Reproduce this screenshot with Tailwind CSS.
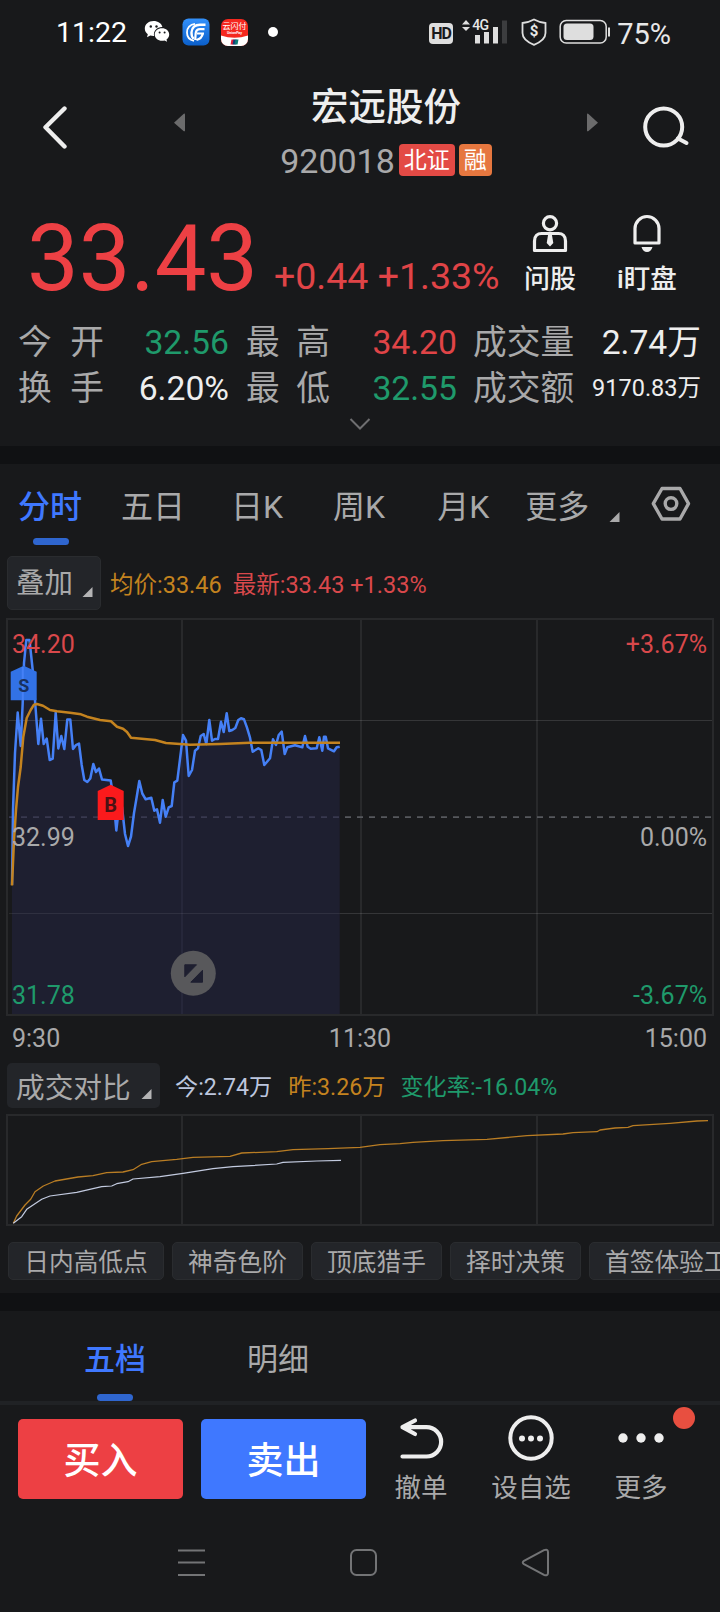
<!DOCTYPE html>
<html lang="zh-CN">
<head>
  <meta charset="UTF-8">
  <meta name="viewport" content="width=device-width, initial-scale=1.0">
  <title>宏远股份 920018</title>
  <script src="https://cdn.jsdelivr.net/npm/@tailwindcss/browser@4"></script>
</head>
<body class="w-[720px] h-[1612px] overflow-hidden bg-[#18191b] text-[#a9a9aa] font-['Roboto','Noto_Sans_CJK_SC',sans-serif] whitespace-nowrap">

  <!-- Status bar -->
  <div class="h-16 flex items-center pl-14 pr-[49px] text-[#e8e8e8]">
    <span class="w-[71px] text-[28.500px] leading-8 text-white mt-0.5">11:22</span>
    <svg class="ml-[17px]" width="26" height="24" viewBox="0 0 26 24">
      <path fill="#fff" d="M9.500 1C4.500 1 .8 4.300.8 8.500c0 2.300 1.100 4.300 3 5.700l-.8 3 3.300-1.700c1 .3 2 .5 3.200.5h.6C9 11 13 7 18 7h.4C17.600 3.500 14 1 9.500 1z"/>
      <path fill="#fff" d="M18 8.200c-4 0-7.300 2.700-7.300 6.300s3.300 6.300 7.300 6.300c.9 0 1.700-.1 2.500-.4l2.600 1.400-.6-2.300c1.700-1.200 2.700-3 2.700-5 0-3.600-3.200-6.300-7.200-6.300z"/>
      <g fill="#18191b"><circle cx="6.800" cy="6.500" r="1.200"/><circle cx="12.500" cy="6.500" r="1.200"/><circle cx="15.600" cy="12.600" r="1"/><circle cx="20.600" cy="12.600" r="1"/></g>
    </svg>
    <svg class="ml-3" width="28" height="28" viewBox="0 0 28 28">
      <defs><linearGradient id="app" x1="0" y1="0" x2="0" y2="1"><stop stop-color="#3391fb"/><stop offset="1" stop-color="#0b5fca"/></linearGradient></defs>
      <rect x=".5" y=".5" width="27" height="27" rx="6" fill="url(#app)"/>
      <g fill="none" stroke="#fff">
        <path stroke-width="1.800" d="M13 5.800C8 6.500 5 10 5 14.500c0 4.200 2.600 7.500 7 8.300"/>
        <path stroke-width="2.400" d="M23.500 6.800h-5.500c-5 0-8 3-8.500 7.500-.2 2.800.6 5 2.200 6.500"/>
        <path stroke-width="2.200" d="M22.500 11.200H18c-2.800 0-4 1.700-4.300 4l-.5 6.800M22 15.500h-7M20.800 15.500c-.6 3.200-3 5.700-6.300 6.500"/>
      </g>
    </svg>
    <div class="ml-[11px] relative w-[27px] h-[27px] rounded-[7px] overflow-hidden bg-[#f4281f]">
      <svg class="absolute inset-0" width="27" height="27" viewBox="0 0 27 27">
        <path fill="#fff" d="M0 16.500Q13.500 21 27 16.500V27H0z"/>
        <path fill="#e0203a" d="M10.500 20.500h3l-1 5h-3z"/><path fill="#143a78" d="M12.500 20.500h3l-1 5h-3z"/><path fill="#0d7d78" d="M14.500 20.500h3l-1 5h-3z"/>
      </svg>
      <span class="absolute left-[1.500px] top-[3px] text-[8px] leading-[10px] text-white">云闪付</span>
      <span class="absolute left-[6px] top-[12px] text-[3.500px] leading-[4px] font-bold text-white">UnionPay</span>
    </div>
    <div class="ml-5 w-2.5 h-2.5 rounded-full bg-white"></div>

    <div class="ml-auto flex items-center">
      <div class="w-6 h-[21px] rounded-[4px] bg-[#dedede] text-[#18191b] text-[16px] leading-[21px] font-bold text-center tracking-[-1px] mt-0.5">HD</div>
      <div class="relative ml-2 w-[46px] h-[27px]">
        <svg width="46" height="27" viewBox="0 0 46 27">
          <path fill="#dedede" d="M1 5.500L5 1l4 4.500zM1 8l4 4 4-4z"/>
          <path fill="#dedede" d="M14 16h5v8.500h-5zM23 13h5v11.500h-5zM32 8h5v16.500h-5z"/>
          <path fill="#3c3d3f" d="M41 1.500h5v23h-5z"/>
        </svg>
        <span class="absolute left-[11px] -top-[2px] text-[14px] leading-4 font-medium tracking-[-.5px]">4G</span>
      </div>
      <div class="relative ml-[13px] w-7 h-7">
        <svg width="28" height="28" viewBox="0 0 28 28" fill="none" stroke="#dedede" stroke-width="1.800"><path d="M14 1.500c3.500 2 7 3 11.500 3.500v10c0 5.500-4.500 9-11.500 11.800C7 24 2.500 20.500 2.500 15V5C7 4.500 10.500 3.500 14 1.500z"/></svg>
        <span class="absolute inset-0 text-center text-[15px] leading-[27px] font-bold">$</span>
      </div>
      <svg class="ml-[11px]" width="52" height="26" viewBox="0 0 52 26">
        <rect x="1.200" y="1.500" width="46" height="22.500" rx="6" fill="none" stroke="#dedede" stroke-width="1.500"/>
        <rect x="4.500" y="4.500" width="30" height="16.500" rx="3.500" fill="#dedede"/>
        <path stroke="#dedede" stroke-width="2" d="M50 8.500v9"/>
      </svg>
      <span class="ml-[6px] text-[29px] leading-8 mt-1">75%</span>
    </div>
  </div>

  <!-- Header -->
  <header class="h-[136px] flex items-start">
    <svg class="ml-[41px] mt-[41px]" width="28" height="44" viewBox="0 0 28 44" fill="none" stroke="#eee" stroke-width="4.400" stroke-linecap="round" stroke-linejoin="round"><path d="M23.500 3.500L4.500 22.300l19 19.200"/></svg>
    <svg class="ml-[105px] mt-[49px]" width="12" height="20" viewBox="0 0 12 20"><path fill="#6b6b6c" d="M0 9.700L9.500 1q1.500-1 1.500.6v15.800q0 1.500-1.500.6z"/></svg>
    <div class="w-[400px] flex flex-col items-center">
      <h1 class="mt-5 text-[37.500px] leading-[46px] font-medium text-[#eee]">宏远股份</h1>
      <div class="mt-3 flex items-center text-[34px] leading-[34px]">
        <span class="pt-0.5">920018</span>
        <span class="ml-[4px] w-14 h-8 rounded-[4px] bg-[#e34a45] text-white text-[23px] leading-[33px] text-center">北证</span>
        <span class="ml-1 w-[33px] h-8 rounded-[4px] bg-[#e6773f] text-white text-[23px] leading-[33px] text-center">融</span>
      </div>
    </div>
    <svg class="ml-[1px] mt-[49px]" width="12" height="20" viewBox="0 0 12 20"><path fill="#6b6b6c" d="M11 9.700L1.500 1Q0 0 0 1.600v15.800q0 1.500 1.500.6z"/></svg>
    <svg class="ml-[43px] mt-[40px]" width="48" height="48" viewBox="0 0 48 48" fill="none" stroke="#eee" stroke-width="4" stroke-linecap="round"><circle cx="21.700" cy="23" r="18.500"/><path d="M36 34.500l8.500 4.500"/></svg>
  </header>

  <!-- Quote -->
  <section class="h-[246px]">
    <div class="h-[120px] flex">
      <span class="ml-[27px] w-[247px] text-[92px] leading-[118px] text-[#ed4044]">33.43</span>
      <span class="w-[243px] mt-[55px] text-[37.500px] leading-[42px] text-[#e04447]">+0.44 +1.33%</span>
      <div class="w-[66px] flex flex-col items-center">
        <svg class="mt-[14px]" width="38" height="40" viewBox="0 0 38 40" fill="none" stroke="#eee" stroke-width="3.200">
          <circle cx="19" cy="9.300" r="6.600"/><path stroke-linejoin="round" d="M3.500 36.500V27c0-5 3-7.500 7-7.500h17c4 0 7 2.500 7 7.500v9.500z"/><path fill="#eee" stroke="none" d="M17.200 20h3.600l1.500 9L19 32.500 15.700 29z"/>
        </svg>
        <span class="mt-[12px] text-[26px] leading-[26px] font-medium text-[#eee]">问股</span>
      </div>
      <div class="ml-[31px] w-[66px] flex flex-col items-center">
        <svg class="mt-[14px]" width="30" height="40" viewBox="0 0 30 40" fill="none" stroke="#eee" stroke-width="3.200">
          <path stroke-linejoin="round" d="M3 29V14.500a12 12 0 0 1 24 0V29z"/><path fill="#eee" stroke="none" d="M9.500 33h11q-1.500 5-5.500 5t-5.500-5z"/>
        </svg>
        <span class="mt-[12px] text-[26.500px] leading-[26px] font-medium text-[#eee]">i盯盘</span>
      </div>
    </div>
    <div class="pl-[18px] pr-[19px] grid grid-cols-[86px_125px_17px_84px_127px_16px_102px_126px] text-[33.700px] leading-[46px]">
      <span class="flex justify-between"><i class="not-italic">今</i><i class="not-italic">开</i></span>
      <span class="text-right text-[#1f9a6b]">32.56</span>
      <span></span>
      <span class="flex justify-between"><i class="not-italic">最</i><i class="not-italic">高</i></span>
      <span class="text-right text-[#e04447]">34.20</span>
      <span></span>
      <span>成交量</span>
      <span class="text-right text-[#eee]">2.74万</span>
      <span class="flex justify-between"><i class="not-italic">换</i><i class="not-italic">手</i></span>
      <span class="text-right text-[#eee]">6.20%</span>
      <span></span>
      <span class="flex justify-between"><i class="not-italic">最</i><i class="not-italic">低</i></span>
      <span class="text-right text-[#1f9a6b]">32.55</span>
      <span></span>
      <span>成交额</span>
      <span class="text-right text-[#eee] text-[23.500px] leading-[44px]">9170.83万</span>
    </div>
    <svg class="mx-auto mt-[5px]" width="24" height="14" viewBox="0 0 24 14" fill="none" stroke="#6e6e70" stroke-width="2"><path d="M2.500 2L12 11.500 21.500 2"/></svg>
  </section>

  <div class="h-[18px] bg-[#101113]"></div>

  <!-- Period tabs -->
  <nav class="h-[91px] flex pl-[18px] text-[32px] leading-[86px]">
    <div class="w-16 h-[84px] relative text-[#3f78ff] font-medium">分时<div class="absolute left-[15px] bottom-[3px] w-9 h-[7px] rounded-full bg-[#2f66cf]"></div></div>
    <div class="ml-[39px]">五日</div>
    <div class="ml-[46px]">日K</div>
    <div class="ml-[50px]">周K</div>
    <div class="ml-[52px]">月K</div>
    <div class="ml-[36px]">更多</div>
    <svg class="ml-[20px] mt-[48px]" width="11" height="10" viewBox="0 0 11 10"><path fill="#a9a9aa" d="M10.500 0v10H.5z"/></svg>
    <svg class="ml-[31px] mt-[21px]" width="40" height="38" viewBox="0 0 40 38" fill="none" stroke="#a9a9aa" stroke-width="3.400"><path stroke-linejoin="round" d="M11 3.500h18L37.500 18.600 29 34H11L2.300 18.600z"/><circle cx="20" cy="18.600" r="5.800"/></svg>
  </nav>

  <!-- Overlay row -->
  <div class="h-[55px] flex items-center pl-[7px] text-[23.500px] leading-[54px]">
    <div class="w-[94px] h-[54px] rounded-[5px] bg-[#232529] border border-[#2a2c2f] pl-[8px] flex items-center text-[28.500px] leading-[54px]"><span class="pt-[3px]">叠加</span><svg class="ml-[9px] mt-[18px]" width="11" height="10" viewBox="0 0 11 10"><path fill="#b4b4b5" d="M10.500 0v10H.5z"/></svg></div>
    <span class="ml-[9px] mt-[5px] text-[#c4831f]">均价:33.46</span>
    <span class="ml-[11px] mt-[5px] text-[#d9484b]">最新:33.43 +1.33%</span>
  </div>

  <!-- Intraday chart -->
  <div class="relative h-[410px] text-[25px] leading-[30px]">
    <svg class="block" width="720" height="410" viewBox="0 0 720 410" fill="none">
      <path fill="#1e1f30" d="M12 404V275L13 200 15 143 17.700 102.500 20.700 136 22.700 93 24 53 26.300 30H29.500L32.700 60 35.500 97 38.300 134 41 108.700 43.700 134 46.700 128.500 49.700 150 52.700 148.700 55.700 102.700 58.300 138.500 61.300 126 64.300 139 67.300 109.500H70.300L73 139 76 135 79 133.500 81.700 155 84.300 170 87.300 172 90.300 168.500 93.300 154 96 162 99 158.500 102 169.500 110.700 170.500 113.300 187 116.300 220.500 119 197H122L125 224 128 236 131 226.500 134 203 136.700 187 139.300 171 142.300 183.500 145.700 189.300 151.300 187.700 154.300 200.700 157 199.300 160 212.700 162.700 190 165.700 206.700 168.700 197.300 171.700 196 174.300 172.300 177.300 170.700 183 125 186 130.700 188.700 166 192 160 195 140.700 198 138.300 200.700 126 203.700 124 206.300 134 209.300 110 212 130.700 215 129H218L221 111.700 223.700 122 226.700 103.300 229.300 121 232.300 120 235.300 118 238.300 110 241 108.300 244 109.300 247 117.700 250 127.700 252.700 141.700 258.300 138.300 261.300 140 264.300 155 270 148.300 273 129.300 276 135 278.700 125 281.700 121.700 284.700 144 287.300 137.300 295 135.300 302.300 137.300 305 126 307.700 136.700 310.700 138.700 316.700 138.300 319.300 127.300 322.300 140.700 324 126.700H325.700L328 138.300 334 141.300 336.700 137.300 339.700 136.700V404z"/>
      <!-- grid -->
      <path stroke="#28292b" stroke-width="2" d="M7 9H713V405H7zM182 10V125M361 10V404M537 10V404"/>
      <path stroke="#26273a" stroke-width="2" d="M182 130V404"/>
      <path stroke="#fff" stroke-opacity=".13" d="M9 110.500H712M340 303.500H712"/>
      <path stroke="#fff" stroke-opacity=".08" d="M9 303.500H340"/>
      <path stroke="#38394f" stroke-width="1.800" stroke-dasharray="6 6" d="M9 207.200H340"/>
      <path stroke="#56585d" stroke-width="1.800" stroke-dasharray="6 6" d="M345 207.200H712"/>
      <!-- price -->
      <path stroke="#4580f6" stroke-width="2.500" stroke-linejoin="round" d="M12 275L13 200 15 143 17.700 102.500 20.700 136 22.700 93 24 53 26.300 30H29.500L32.700 60 35.500 97 38.300 134 41 108.700 43.700 134 46.700 128.500 49.700 150 52.700 148.700 55.700 102.700 58.300 138.500 61.300 126 64.300 139 67.300 109.500H70.300L73 139 76 135 79 133.500 81.700 155 84.300 170 87.300 172 90.300 168.500 93.300 154 96 162 99 158.500 102 169.500 110.700 170.500 113.300 187 116.300 220.500 119 197H122L125 224 128 236 131 226.500 134 203 136.700 187 139.300 171 142.300 183.500 145.700 189.300 151.300 187.700 154.300 200.700 157 199.300 160 212.700 162.700 190 165.700 206.700 168.700 197.300 171.700 196 174.300 172.300 177.300 170.700 183 125 186 130.700 188.700 166 192 160 195 140.700 198 138.300 200.700 126 203.700 124 206.300 134 209.300 110 212 130.700 215 129H218L221 111.700 223.700 122 226.700 103.300 229.300 121 232.300 120 235.300 118 238.300 110 241 108.300 244 109.300 247 117.700 250 127.700 252.700 141.700 258.300 138.300 261.300 140 264.300 155 270 148.300 273 129.300 276 135 278.700 125 281.700 121.700 284.700 144 287.300 137.300 295 135.300 302.300 137.300 305 126 307.700 136.700 310.700 138.700 316.700 138.300 319.300 127.300 322.300 140.700 324 126.700H325.700L328 138.300 334 141.300 336.700 137.300 339.700 136.700"/>
      <!-- average -->
      <path stroke="#c4831f" stroke-width="2.500" stroke-linejoin="round" d="M12 275.500L14 230 16 200 18 177 20.700 157 23.300 127 26.700 108 30.700 100 34 94.700 37 94 43 95.700 50 100 57 101.300 70 102.700 81 104.300 87 106.700 100 110 111 111.300 117 116.700 123 118.700 127 122 131 127.700 155 130 166 133 180 134 190 134.700 220 134 250 132.700H340"/>
      <!-- trade markers -->
      <path fill="#3272e6" d="M10.700 61.700L23.700 55.700 36.700 61.700V90.300H10.700z"/>
      <path stroke="#4580f6" stroke-width="2" d="M22.800 90V57"/>
      <path fill="#fb1a1c" d="M97.700 181L110.700 174.700 123.700 181V210H97.700z"/>
      <text x="23.700" y="82" text-anchor="middle" font-size="18" font-weight="700" fill="#18305f">S</text>
      <text x="110.700" y="202" text-anchor="middle" font-size="20" font-weight="700" fill="#4a1214">B</text>
      <!-- expand -->
      <circle cx="193.300" cy="363.300" r="22.500" fill="#58585b"/>
      <path fill="#1e1f30" stroke="#1e1f30" stroke-linejoin="round" d="M184.800 354.800H196.500L184.800 366.800zM202.500 360.300V372.200H190.800z"/>
    </svg>
    <span class="absolute left-3 top-5 text-[#d9484b]">34.20</span>
    <span class="absolute left-3 top-[213px]">32.99</span>
    <span class="absolute left-3 top-[371px] text-[#1f9a6b]">31.78</span>
    <span class="absolute right-[13px] top-5 text-[#d9484b]">+3.67%</span>
    <span class="absolute right-[13px] top-[213px]">0.00%</span>
    <span class="absolute right-[13px] top-[371px] text-[#1f9a6b]">-3.67%</span>
  </div>
  <div class="h-[43px] pl-3 pr-[13px] flex justify-between text-[25px] leading-[37px]">
    <span>9:30</span><span class="ml-[15px]">11:30</span><span>15:00</span>
  </div>

  <!-- Volume compare -->
  <div class="h-[45px] flex items-center pl-[7px] text-[23.200px] leading-[45px]">
    <div class="w-[153px] h-[45px] rounded-[5px] bg-[#232529] pl-[9px] flex items-center text-[28.700px]"><span class="pt-[5px]">成交对比</span><svg class="ml-[10px] mt-[17px]" width="11" height="10" viewBox="0 0 11 10"><path fill="#b4b4b5" d="M10.500 0v10H.5z"/></svg></div>
    <span class="ml-[15px] mt-[4px] text-[#bcc6de]">今:2.74万</span>
    <span class="ml-[16px] mt-[4px] text-[#c4831f]">昨:3.26万</span>
    <span class="ml-[15px] mt-[4px] text-[#1f9a6b]">变化率:-16.04%</span>
  </div>
  <svg class="block mt-0.5" width="720" height="120" viewBox="0 0 720 120" fill="none">
    <path stroke="#28292b" stroke-width="2" d="M7 5H713V115H7zM182 5V115M361 5V115M537 5V115"/>
    <path stroke="#b97d24" stroke-width="1.300" stroke-linejoin="round" d="M13.300 113.300L16.700 106 25 95 30.700 89.300 35 81.700 43.300 76 55 71 78 67 93 65.700 106.700 62.700 123 62 133 59.700 141.700 54.300 151.700 51.700 176.700 49.300 193 47.300 230 46.300 241.700 43 276.700 41.700 293 39.700 328 38.700 360 37.300 380 34.700 400 33.700 413 32.300 443 30.700 487 29.300 527 25.700 563 24 573 22.700 597 21.700 600 20 615 18 628 17.300 633 15.700 670 13.300 697 11 708 10.700"/>
    <path stroke="#c3cbe0" stroke-width="1.200" stroke-linejoin="round" d="M13.300 113.300L21.700 106.700 26.700 99.300 41.700 89.300 50 86 76.700 82.300 101.700 76.700 111.700 76 116.700 73.700 128 71.700 133 69 160 66.700 183 63.300 213 58.700 233 56.700 276.700 54 283 52.300 316.700 51 341 50.300"/>
  </svg>

  <!-- Indicator chips -->
  <div class="h-[63px] pt-[12px] pl-2 flex gap-2 overflow-hidden text-[24.700px] leading-[40px]">
    <span class="shrink-0 h-[38px] w-[156px] text-center rounded-[5px] bg-[#232529] border border-[#2a2c2f]">日内高低点</span>
    <span class="shrink-0 h-[38px] w-[131px] text-center rounded-[5px] bg-[#232529] border border-[#2a2c2f]">神奇色阶</span>
    <span class="shrink-0 h-[38px] w-[131px] text-center rounded-[5px] bg-[#232529] border border-[#2a2c2f]">顶底猎手</span>
    <span class="shrink-0 h-[38px] w-[131px] text-center rounded-[5px] bg-[#232529] border border-[#2a2c2f]">择时决策</span>
    <span class="shrink-0 h-[38px] px-[15px] rounded-[5px] bg-[#232529] border border-[#2a2c2f]">首签体验工具</span>
  </div>

  <div class="h-[18px] bg-[#101113]"></div>

  <!-- Order book tabs -->
  <nav class="h-[90px] flex pl-[84px] text-[31px] leading-[97px]">
    <div class="h-[90px] relative text-[#3f78ff] font-medium">五档<div class="absolute left-[13px] bottom-0 w-9 h-[7px] rounded-full bg-[#2f66cf]"></div></div>
    <div class="ml-[101px]">明细</div>
  </nav>

  <!-- Trade bar -->
  <footer class="h-[109px] flex border-t-4 border-[#202225] pl-[18px] text-[26.500px] leading-[30px]">
    <button class="mt-[14px] w-[165px] h-20 pt-1.5 rounded-[5px] bg-[#ed4044] text-white text-[37px] font-medium">买入</button>
    <button class="ml-[18px] mt-[14px] w-[165px] h-20 pt-1.5 rounded-[5px] bg-[#3f78ff] text-white text-[37px] font-medium">卖出</button>
    <div class="ml-[15px] w-20 flex flex-col items-center">
      <svg class="mt-2.5 ml-0.5" width="48" height="48" viewBox="0 0 48 48" fill="none" stroke="#eee" stroke-width="4.200" stroke-linecap="round" stroke-linejoin="round"><path d="M4.500 41.500h24a14.300 14.300 0 0 0 0-29.300H4.500M17 5.500L4.500 12.200 17 19"/></svg>
      <span class="mt-[10px]">撤单</span>
    </div>
    <div class="ml-[25px] w-[90px] flex flex-col items-center">
      <svg class="mt-2.5" width="48" height="48" viewBox="0 0 48 48"><circle cx="24" cy="23" r="20.700" fill="none" stroke="#eee" stroke-width="4"/><g fill="#eee"><circle cx="15" cy="23.500" r="3"/><circle cx="24" cy="23.500" r="3"/><circle cx="33" cy="23.500" r="3"/></g></svg>
      <span class="mt-[10px]">设自选</span>
    </div>
    <div class="ml-[25px] w-20 flex flex-col items-center relative">
      <svg class="mt-2.5" width="48" height="48" viewBox="0 0 48 48" fill="#eee"><circle cx="6" cy="23" r="4.700"/><circle cx="24" cy="23" r="4.700"/><circle cx="42" cy="23" r="4.700"/></svg>
      <span class="mt-[10px]">更多</span>
      <div class="absolute left-[72px] top-[2px] w-[22px] h-[22px] rounded-full bg-[#e84f40]"></div>
    </div>
  </footer>

  <!-- System navigation -->
  <div class="h-[102px] pt-[38px] flex">
    <svg class="ml-[177px]" width="30" height="30" viewBox="0 0 30 30" stroke="#737476" stroke-width="2"><path d="M1 2.500h27M1 14.500h27M1 27h27"/></svg>
    <svg class="ml-[142px]" width="30" height="30" viewBox="0 0 30 30" fill="none" stroke="#737476" stroke-width="2"><rect x="2" y="2" width="25" height="25" rx="5.500"/></svg>
    <svg class="ml-[142px]" width="30" height="30" viewBox="0 0 30 30" fill="none" stroke="#737476" stroke-width="2" stroke-linejoin="round"><path d="M2.500 13.200L23 2.200q3.800-1.600 4 1.800v21q-.2 3.400-4 1.800L2.500 15.800q-1.500-1.300 0-2.600z"/></svg>
  </div>
</body>
</html>
